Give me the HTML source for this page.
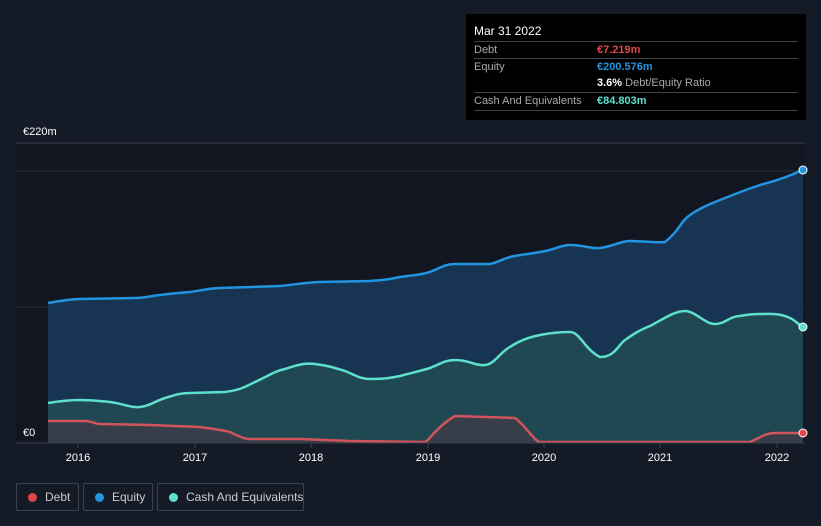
<!DOCTYPE html>
<html><head><meta charset="utf-8"><style>
html,body{margin:0;width:821px;height:526px;overflow:hidden}
body{background:#151b26;font-family:"Liberation Sans",sans-serif;position:relative}
.tt{position:absolute;left:466px;top:14px;width:340px;height:106px;background:#000;color:#fff;font-size:11px}
.row{position:absolute;left:8px;width:324px;border-top:1px solid #444;height:17px;line-height:17px}
.lab{color:#aaa;position:absolute;left:0}
.val{position:absolute;left:123px;font-weight:bold}
.leg{position:absolute;top:483px;height:28px;border:1px solid #3a404c;border-radius:2px;color:#ccc;font-size:12px;line-height:27px;box-sizing:border-box;white-space:nowrap}
.dot{position:absolute;left:11px;top:9px;width:9px;height:9px;border-radius:50%}
</style></head><body>
<svg width="821" height="526" style="position:absolute;left:0;top:0">
<rect x="16" y="143" width="789" height="300" fill="#111620"/>
<line x1="16" y1="143" x2="805" y2="143" stroke="#3a404c"/>
<line x1="16" y1="171" x2="805" y2="171" stroke="#262c36"/>
<line x1="16" y1="307" x2="805" y2="307" stroke="#262c36"/>
<path d="M48,303 C60,301 70,299 80,299 L135,298 C145,298 150,296 160,295 C175,293 180,293 190,292 C205,290 210,288 220,288 L280,286 C300,284 310,282 320,282 L370,281 C385,280 390,279 400,277 C415,275 420,275 430,272 C440,268 445,264 455,264 L490,264 C500,262 505,257 515,256 C525,254 530,254 540,252 C555,250 560,245 570,245 C585,245 590,249 600,248 C615,246 620,241 630,241 C640,241 660,243 665,242 C680,230 680,222 690,215 C700,208 710,204 720,200 C735,194 745,190 760,185 C770,182 775,181 780,179 C790,176 795,173 803,170 L803,443 L48,443Z" fill="#173452"/>
<path d="M48,403 C60,401 70,400 80,400 C95,400 100,401 110,402 C125,404 130,408 140,407 C150,406 155,401 165,398 C175,395 180,393 190,393 L225,392 C240,390 245,387 255,382 C270,375 275,371 285,369 C300,364 305,363 315,364 C330,366 335,368 345,371 C355,375 360,379 370,379 C385,379 390,378 400,376 C415,372 420,371 430,368 C440,364 445,360 455,360 C470,360 475,366 485,365 C495,364 500,352 510,347 C520,340 530,337 540,335 C550,333 560,332 570,332 C580,332 585,350 600,357 C615,357 618,345 625,340 C635,333 640,330 650,326 C665,318 675,311 685,311 C695,311 705,324 715,324 C725,324 730,316 740,316 C750,314 755,314 760,314 C770,314 780,313 790,318 C795,320 800,326 803,327 L803,443 L48,443Z" fill="#214a52" opacity=".95"/>
<path d="M48,421 L85,421 C92,421 95,424 100,424 L150,425 L200,427 C215,429 222,430 230,432 C240,437 245,439 250,439 L300,439 L350,441 L425,442 C430,440 435,428 455,416 L515,418 C525,425 535,442 540,442 L750,442 C760,438 765,433 775,433 L803,433 L803,443 L48,443Z" fill="#3a3d48" opacity=".9"/>
<path d="M48,303 C60,301 70,299 80,299 L135,298 C145,298 150,296 160,295 C175,293 180,293 190,292 C205,290 210,288 220,288 L280,286 C300,284 310,282 320,282 L370,281 C385,280 390,279 400,277 C415,275 420,275 430,272 C440,268 445,264 455,264 L490,264 C500,262 505,257 515,256 C525,254 530,254 540,252 C555,250 560,245 570,245 C585,245 590,249 600,248 C615,246 620,241 630,241 C640,241 660,243 665,242 C680,230 680,222 690,215 C700,208 710,204 720,200 C735,194 745,190 760,185 C770,182 775,181 780,179 C790,176 795,173 803,170" fill="none" stroke="#2394e0" stroke-width="2.5"/>
<path d="M48,403 C60,401 70,400 80,400 C95,400 100,401 110,402 C125,404 130,408 140,407 C150,406 155,401 165,398 C175,395 180,393 190,393 L225,392 C240,390 245,387 255,382 C270,375 275,371 285,369 C300,364 305,363 315,364 C330,366 335,368 345,371 C355,375 360,379 370,379 C385,379 390,378 400,376 C415,372 420,371 430,368 C440,364 445,360 455,360 C470,360 475,366 485,365 C495,364 500,352 510,347 C520,340 530,337 540,335 C550,333 560,332 570,332 C580,332 585,350 600,357 C615,357 618,345 625,340 C635,333 640,330 650,326 C665,318 675,311 685,311 C695,311 705,324 715,324 C725,324 730,316 740,316 C750,314 755,314 760,314 C770,314 780,313 790,318 C795,320 800,326 803,327" fill="none" stroke="#5fe0cc" stroke-width="2.5"/>
<path d="M48,421 L85,421 C92,421 95,424 100,424 L150,425 L200,427 C215,429 222,430 230,432 C240,437 245,439 250,439 L300,439 L350,441 L425,442 C430,440 435,428 455,416 L515,418 C525,425 535,442 540,442 L750,442 C760,438 765,433 775,433 L803,433" fill="none" stroke="#d0545c" stroke-width="2.5"/>
<line x1="16" y1="443" x2="805" y2="443" stroke="#3a404c"/>
<g stroke="#3a404c"><line x1="78" y1="443" x2="78" y2="448"/><line x1="195" y1="443" x2="195" y2="448"/><line x1="311" y1="443" x2="311" y2="448"/><line x1="428" y1="443" x2="428" y2="448"/><line x1="544" y1="443" x2="544" y2="448"/><line x1="660" y1="443" x2="660" y2="448"/><line x1="777" y1="443" x2="777" y2="448"/></g>
<circle cx="803" cy="170" r="4" fill="#2394e0" stroke="#fff" stroke-width="1"/>
<circle cx="803" cy="327" r="4" fill="#5fe0cc" stroke="#fff" stroke-width="1"/>
<circle cx="803" cy="433" r="4" fill="#e0484c" stroke="#fff" stroke-width="1"/>
<g fill="#fff" font-size="11" font-family="Liberation Sans"><text x="23" y="135">€220m</text><text x="23" y="436">€0</text>
<g text-anchor="middle"><text x="78" y="461">2016</text><text x="195" y="461">2017</text><text x="311" y="461">2018</text><text x="428" y="461">2019</text><text x="544" y="461">2020</text><text x="660" y="461">2021</text><text x="777" y="461">2022</text></g></g>
</svg>
<div class="tt">
<div style="position:absolute;left:8px;top:10px;font-size:12px">Mar 31 2022</div>
<div class="row" style="top:27px"><span class="lab">Debt</span><span class="val" style="color:#e0484c">€7.219m</span></div>
<div class="row" style="top:44px"><span class="lab">Equity</span><span class="val" style="color:#2394e0">€200.576m</span></div>
<div class="row" style="top:61px;border-top:none"><span class="val" style="color:#fff">3.6% <span style="color:#aaa;font-weight:normal">Debt/Equity Ratio</span></span></div>
<div class="row" style="top:78px"><span class="lab">Cash And Equivalents</span><span class="val" style="color:#5fe0cc">€84.803m</span></div>
<div class="row" style="top:96px;height:0"></div>
</div>
<div class="leg" style="left:16px;width:63px"><span class="dot" style="background:#e0484c"></span><span style="position:absolute;left:28px">Debt</span></div>
<div class="leg" style="left:83px;width:70px"><span class="dot" style="background:#2394e0"></span><span style="position:absolute;left:28px">Equity</span></div>
<div class="leg" style="left:157px;width:147px"><span class="dot" style="background:#5fe0cc"></span><span style="position:absolute;left:28px">Cash And Equivalents</span></div>
</body></html>
